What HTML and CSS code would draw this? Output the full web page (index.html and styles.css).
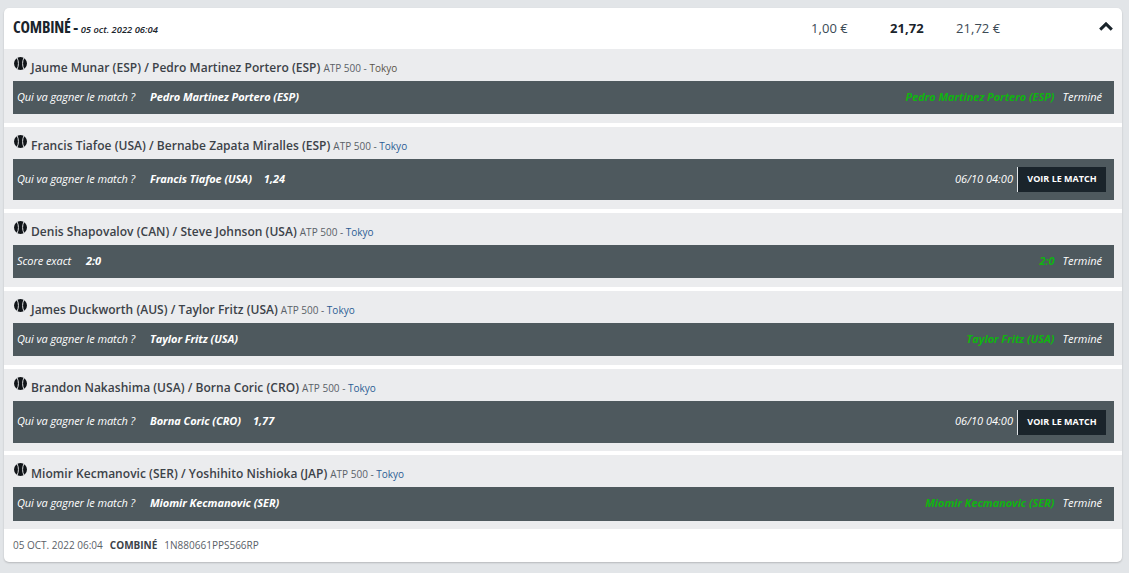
FILE: index.html
```html
<!DOCTYPE html>
<html lang="fr">
<head>
<meta charset="utf-8">
<title>Combiné</title>
<link rel="stylesheet" href="styles.css">
</head>
<body>
<main class="card">
  <header class="head">
    <h1 class="head-title">COMBINÉ - <em class="head-date">05 oct. 2022 06:04</em></h1>
    <span class="stake">1,00 €</span>
    <strong class="odds">21,72</strong>
    <span class="gain">21,72 €</span>
    <svg class="chevron" viewBox="0 0 14 9" width="14" height="9"><path d="M1.2 7.6 7 1.9l5.8 5.7" fill="none" stroke="#1a242b" stroke-width="3"/></svg>
  </header>

  <section class="match">
    <div class="match-title"><svg class="ball" viewBox="0 0 14 14" width="13" height="13"><use href="#ball"/></svg><b>Jaume Munar (ESP) / Pedro Martinez Portero (ESP)</b><span class="league">ATP 500 - <span class="city-first">Tokyo</span></span></div>
    <div class="bar">
      <span class="question">Qui va gagner le match ?</span><b class="pick">Pedro Martinez Portero (ESP)</b>
      <span class="right"><b class="result">Pedro Martinez Portero (ESP)</b><span class="status">Terminé</span></span>
    </div>
  </section>

  <section class="match">
    <div class="match-title"><svg class="ball" viewBox="0 0 14 14" width="13" height="13"><use href="#ball"/></svg><b>Francis Tiafoe (USA) / Bernabe Zapata Miralles (ESP)</b><span class="league">ATP 500 - <span class="city">Tokyo</span></span></div>
    <div class="bar bar-live">
      <span class="question">Qui va gagner le match ?</span><b class="pick">Francis Tiafoe (USA)</b><b class="price">1,24</b>
      <span class="right"><span class="when">06/10 04:00</span><a class="watch">VOIR LE MATCH</a></span>
    </div>
  </section>

  <section class="match">
    <div class="match-title"><svg class="ball" viewBox="0 0 14 14" width="13" height="13"><use href="#ball"/></svg><b>Denis Shapovalov (CAN) / Steve Johnson (USA)</b><span class="league">ATP 500 - <span class="city">Tokyo</span></span></div>
    <div class="bar">
      <span class="question question-short">Score exact</span><b class="pick">2:0</b>
      <span class="right"><b class="result">2:0</b><span class="status">Terminé</span></span>
    </div>
  </section>

  <section class="match">
    <div class="match-title"><svg class="ball" viewBox="0 0 14 14" width="13" height="13"><use href="#ball"/></svg><b>James Duckworth (AUS) / Taylor Fritz (USA)</b><span class="league">ATP 500 - <span class="city">Tokyo</span></span></div>
    <div class="bar">
      <span class="question">Qui va gagner le match ?</span><b class="pick">Taylor Fritz (USA)</b>
      <span class="right"><b class="result">Taylor Fritz (USA)</b><span class="status">Terminé</span></span>
    </div>
  </section>

  <section class="match match-short">
    <div class="match-title"><svg class="ball" viewBox="0 0 14 14" width="13" height="13"><use href="#ball"/></svg><b>Brandon Nakashima (USA) / Borna Coric (CRO)</b><span class="league">ATP 500 - <span class="city">Tokyo</span></span></div>
    <div class="bar bar-live bar-plus">
      <span class="question">Qui va gagner le match ?</span><b class="pick">Borna Coric (CRO)</b><b class="price">1,77</b>
      <span class="right"><span class="when">06/10 04:00</span><a class="watch">VOIR LE MATCH</a></span>
    </div>
  </section>

  <section class="match match-short match-last">
    <div class="match-title"><svg class="ball" viewBox="0 0 14 14" width="13" height="13"><use href="#ball"/></svg><b>Miomir Kecmanovic (SER) / Yoshihito Nishioka (JAP)</b><span class="league">ATP 500 - <span class="city">Tokyo</span></span></div>
    <div class="bar bar-plus">
      <span class="question">Qui va gagner le match ?</span><b class="pick">Miomir Kecmanovic (SER)</b>
      <span class="right"><b class="result">Miomir Kecmanovic (SER)</b><span class="status">Terminé</span></span>
    </div>
  </section>

  <footer class="foot">05 OCT. 2022 06:04<b class="foot-type">COMBINÉ</b><span class="foot-ref">1N880661PPS566RP</span></footer>
</main>

<svg class="defs" width="0" height="0" aria-hidden="true">
  <symbol id="ball" viewBox="0 0 14 14">
    <circle cx="7" cy="7" r="7" fill="#101418"/>
    <path d="M3.4 1C5.2 4.6 5.2 9.4 3.4 13M10.6 1C8.8 4.6 8.8 9.4 10.6 13" fill="none" stroke="#ebecee" stroke-width="1"/>
  </symbol>
</svg>
</body>
</html>
```
FILE: styles.css
```css
* { box-sizing: border-box; }
html, body { margin: 0; padding: 0; }
body {
  background: #e2e5e8;
  font-family: "Open Sans", sans-serif;
  color: #3c4248;
  padding: 8px 7px 0 4px;
  height: 573px;
  overflow: hidden;
}
.defs { position: absolute; }
.card {
  width: 1118px;
  background: #fff;
  border-radius: 5px;
  box-shadow: 0 1px 2px rgba(0,0,0,.2);
  overflow: hidden;
}
.head {
  height: 41px;
  display: flex;
  align-items: center;
  padding-left: 9px;
  position: relative;
}
.head-title {
  margin: 0;
  width: 798px;
  font-size: 16px;
  font-weight: 700;
  font-stretch: 75%;
  letter-spacing: -.2px;
  color: #1a242b;
  line-height: 41px;
}
.head-date { font-size: 9.4px; font-weight: 600; font-stretch: 100%; letter-spacing: 0; }
.stake, .gain, .odds {
  font-size: 13px;
  color: #3c4a55;
  letter-spacing: .05px;
  padding-bottom: 2px;
}
.stake { width: 79px; }
.odds { width: 66px; color: #1a242b; font-weight: 700; }
.gain { width: 143px; }
.chevron { display: block; margin-top: -4px; }
.match {
  background: #ebecee;
  padding: 10px 8px 9px 9px;
  margin-bottom: 4px;
}
.match-short { padding-bottom: 8px; }
.match-last { margin-bottom: 0; }
.match-title {
  height: 22px;
  font-size: 12px;
  line-height: 18px;
  display: flex;
  align-items: flex-start;
  white-space: pre;
}
.match-title b { font-weight: 650; color: #3c4248; letter-spacing: .03px; }
.ball { margin: -2px 4px 0 1px; flex: none; }
.league { font-size: 10px; color: #5a6168; margin-left: 3px; }
.city { color: #2b5c94; }
.city-first { color: #5a5348; }
.bar {
  height: 33px;
  background: #4e595e;
  color: #fff;
  display: flex;
  align-items: center;
  padding: 0 12px 2px 4px;
  font-size: 11px;
  font-style: italic;
}
.bar-live { height: 41px; padding-right: 8px; }
.bar-plus { height: 34px; padding-bottom: 3px; }
.bar-live.bar-plus { height: 42px; }
.question { width: 133px; flex: none; letter-spacing: -.08px; }
.question-short { width: 69px; }
.pick { font-weight: 700; letter-spacing: -.07px; }
.price { font-weight: 700; margin-left: 12px; }
.right { margin-left: auto; display: flex; align-items: center; }
.result { color: #10b410; font-weight: 700; margin-right: 8px; letter-spacing: -.07px; }
.when { margin-right: 4px; }
.watch {
  width: 89px;
  height: 25px;
  line-height: 24px;
  margin-bottom: -2px;
  background: #1a242b;
  border-left: 1px solid #dfe3e6;
  color: #fff;
  font-size: 9px;
  font-stretch: 88%;
  font-weight: 700;
  font-style: normal;
  text-align: center;
}
.bar-plus .watch { margin-bottom: -3px; }
.foot {
  height: 33px;
  padding: 0 0 2px 9px;
  display: flex;
  align-items: center;
  font-size: 10px;
  color: #5a6168;
}
.foot-type { margin: 0 7px; font-weight: 700; color: #3c4248; }
.foot-ref { color: #5a6168; }
```
